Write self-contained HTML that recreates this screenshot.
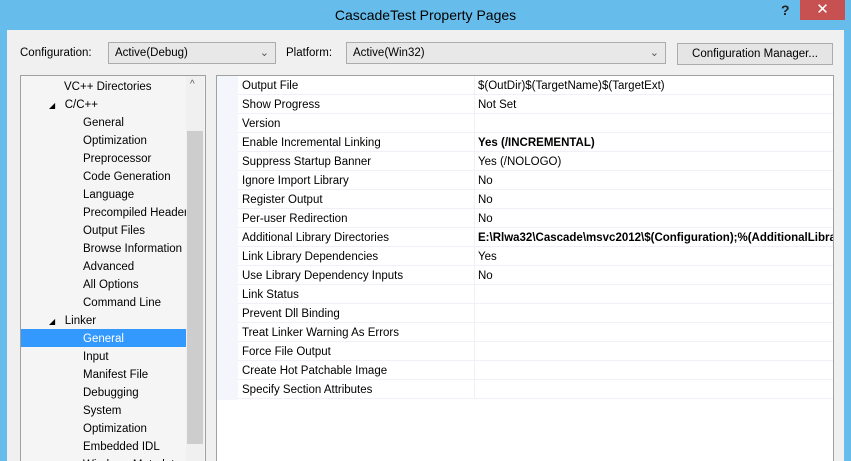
<!DOCTYPE html>
<html style="width:851px;height:461px;overflow:hidden"><head><style>
*{margin:0;padding:0;box-sizing:border-box}
body{width:851px;height:461px;overflow:hidden;background:#66bdeb;font-family:"Liberation Sans",sans-serif;font-size:11.5px;color:#000;position:relative}
.a{position:absolute;white-space:nowrap}
.title{left:0;width:851px;top:7px;text-align:center;font-size:14px;color:#000}
.close{left:800px;top:0;width:45px;height:20px;background:#c75050;color:#fff;text-align:center;font-size:15px;line-height:20px}
.body{left:7px;top:30px;width:837px;height:431px;background:#f0f0f0}
.combo{height:22px;border:1px solid #acacac;background:#e8e8e8;padding:4px 0 0 6px}
.chev{position:absolute;right:6px;top:3px;color:#555;font-size:11px}
.btn{height:22px;border:1px solid #acacac;background:#e5e5e5;text-align:center;padding-top:4px}
.tree{left:20px;top:75px;width:186px;height:390px;background:#f5f5f5;border:1px solid #a0a0a0;overflow:hidden}
.tr{position:absolute;height:18px;line-height:20px;left:0;width:165px}
.grid{left:216px;top:75px;width:618px;height:390px;background:#fff;border:1px solid #a0a0a0;overflow:hidden}
.row{position:absolute;left:21px;width:596px;height:19px;border-bottom:1px solid #eef2f7;line-height:21px}
.row .k{position:absolute;left:4px}
.row .v{position:absolute;left:236px;border-left:1px solid #eef2f7;padding-left:3px;height:19px;width:360px;overflow:hidden}
</style></head><body>
<div class="a title">CascadeTest Property Pages</div>
<div class="a" style="left:781px;top:2px;font-size:14px;font-weight:bold;color:#222">?</div>
<div class="a close">✕</div>
<div class="a body"></div>
<div class="a" style="left:20px;top:47px">Configuration:</div>
<div class="a combo" style="left:108px;top:42px;width:168px">Active(Debug)<span class="chev">⌄</span></div>
<div class="a" style="left:286px;top:47px">Platform:</div>
<div class="a combo" style="left:346px;top:42px;width:320px">Active(Win32)<span class="chev">⌄</span></div>
<div class="a btn" style="left:677px;top:43px;width:156px">Configuration Manager...</div>

<div class="a tree">
<div class="tr" style="top:1px;left:43px">VC++ Directories</div>
<div class="tr" style="top:19px;left:28px"><span style="font-size:8px">◢</span>&nbsp;&nbsp; C/C++</div>
<div class="tr" style="top:37px;left:62px">General</div>
<div class="tr" style="top:55px;left:62px">Optimization</div>
<div class="tr" style="top:73px;left:62px">Preprocessor</div>
<div class="tr" style="top:91px;left:62px">Code Generation</div>
<div class="tr" style="top:109px;left:62px">Language</div>
<div class="tr" style="top:127px;left:62px;width:103px;overflow:hidden">Precompiled Headers</div>
<div class="tr" style="top:145px;left:62px">Output Files</div>
<div class="tr" style="top:163px;left:62px;width:103px;overflow:hidden">Browse Information</div>
<div class="tr" style="top:181px;left:62px">Advanced</div>
<div class="tr" style="top:199px;left:62px">All Options</div>
<div class="tr" style="top:217px;left:62px">Command Line</div>
<div class="tr" style="top:235px;left:28px"><span style="font-size:8px">◢</span>&nbsp;&nbsp; Linker</div>
<div class="tr" style="top:253px;left:0;width:165px;background:#3399ff;color:#fff;padding-left:62px">General</div>
<div class="tr" style="top:271px;left:62px">Input</div>
<div class="tr" style="top:289px;left:62px">Manifest File</div>
<div class="tr" style="top:307px;left:62px">Debugging</div>
<div class="tr" style="top:325px;left:62px">System</div>
<div class="tr" style="top:343px;left:62px">Optimization</div>
<div class="tr" style="top:361px;left:62px">Embedded IDL</div>
<div class="tr" style="top:379px;left:62px">Windows Metadata</div>
<div class="a" style="left:165px;top:0;width:18px;height:400px;background:#f0f0f0"></div>
<div class="a" style="left:166px;top:55px;width:16px;height:313px;background:#cdcdcd"></div>
<div class="a" style="left:169px;top:3px;font-size:10px;color:#555">^</div>
</div>

<div class="a grid">
<div class="a" style="left:0;top:0;width:21px;height:324px;background:#f3f6fb"></div>
<div class="row" style="top:0"><span class="k">Output File</span><span class="v">$(OutDir)$(TargetName)$(TargetExt)</span></div>
<div class="row" style="top:19px"><span class="k">Show Progress</span><span class="v">Not Set</span></div>
<div class="row" style="top:38px"><span class="k">Version</span><span class="v"></span></div>
<div class="row" style="top:57px"><span class="k">Enable Incremental Linking</span><span class="v"><b>Yes (/INCREMENTAL)</b></span></div>
<div class="row" style="top:76px"><span class="k">Suppress Startup Banner</span><span class="v">Yes (/NOLOGO)</span></div>
<div class="row" style="top:95px"><span class="k">Ignore Import Library</span><span class="v">No</span></div>
<div class="row" style="top:114px"><span class="k">Register Output</span><span class="v">No</span></div>
<div class="row" style="top:133px"><span class="k">Per-user Redirection</span><span class="v">No</span></div>
<div class="row" style="top:152px"><span class="k">Additional Library Directories</span><span class="v"><b>E:\Rlwa32\Cascade\msvc2012\$(Configuration);%(AdditionalLibraryDirectories)</b></span></div>
<div class="row" style="top:171px"><span class="k">Link Library Dependencies</span><span class="v">Yes</span></div>
<div class="row" style="top:190px"><span class="k">Use Library Dependency Inputs</span><span class="v">No</span></div>
<div class="row" style="top:209px"><span class="k">Link Status</span><span class="v"></span></div>
<div class="row" style="top:228px"><span class="k">Prevent Dll Binding</span><span class="v"></span></div>
<div class="row" style="top:247px"><span class="k">Treat Linker Warning As Errors</span><span class="v"></span></div>
<div class="row" style="top:266px"><span class="k">Force File Output</span><span class="v"></span></div>
<div class="row" style="top:285px"><span class="k">Create Hot Patchable Image</span><span class="v"></span></div>
<div class="row" style="top:304px"><span class="k">Specify Section Attributes</span><span class="v"></span></div>
</div>
</body></html>
